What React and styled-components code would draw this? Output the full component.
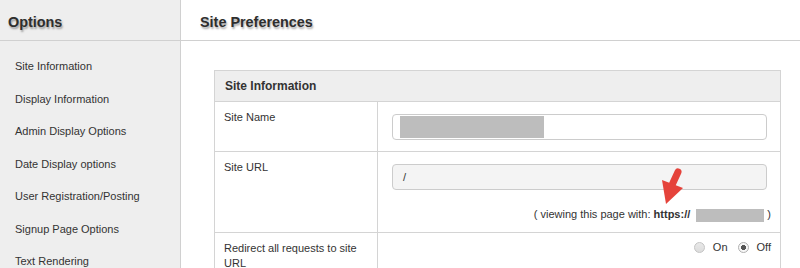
import React from "react";
import styled, { createGlobalStyle } from "styled-components";

const Global = createGlobalStyle`
  html, body { margin: 0; padding: 0; background: #fff; }
  body { font-family: "Liberation Sans", Arial, sans-serif; color: #333; overflow: hidden; }
  * { box-sizing: border-box; }
`;

const Page = styled.div`
  position: relative;
  display: flex;
  width: 800px;
  height: 268px;
  overflow: hidden;
  background: #fff;
`;

const Sidebar = styled.aside`
  flex: none;
  width: 181px;
  background: #eeeeee;
  border-right: 1px solid #d0d0d0;
`;

const Main = styled.main`
  flex: 1;
  min-width: 0;
`;

const PanelHeader = styled.div`
  height: 41px;
  display: flex;
  align-items: center;
  padding: 3px 0 0 ${(p) => p.$indent}px;
  border-bottom: 1px solid #d0d0d0;
`;

const Title = styled.h2`
  margin: 0;
  font-size: 14.4px;
  font-weight: bold;
  color: #2e2e2e;
  text-shadow: 1px 2px 2px rgba(0, 0, 0, 0.35);
`;

const NavList = styled.ul`
  list-style: none;
  margin: 0;
  padding: 9px 0 0;
`;

const NavItem = styled.li`
  height: 32.5px;
  line-height: 32.5px;
  padding-left: 15px;
  font-size: 11px;
  color: #333;
  white-space: nowrap;
`;

const Content = styled.div`
  padding: 29px 19px 0 33px;
`;

const Card = styled.section`
  border: 1px solid #d4d4d4;
`;

const CardHeader = styled.div`
  height: 31px;
  display: flex;
  align-items: center;
  padding-left: 10px;
  background: #eeeeee;
  border-bottom: 1px solid #d4d4d4;
  font-size: 12px;
  font-weight: bold;
  color: #333;
`;

const Row = styled.div`
  display: grid;
  grid-template-columns: 163px 1fr;
  border-bottom: 1px solid #d4d4d4;
  &:last-child { border-bottom: none; }
`;

const Label = styled.div`
  padding: 8px 12px 0 9px;
  border-right: 1px solid #d4d4d4;
  font-size: 11px;
  line-height: 15px;
  color: #333;
`;

const Value = styled.div`
  padding: 12px 9px ${(p) => p.$bottom ?? 11}px 14px;
  font-size: 11px;
  color: #333;
`;

const Field = styled.div`
  height: 26px;
  margin-right: 4px;
  display: flex;
  align-items: center;
  padding-left: ${(p) => (p.$readonly ? 10 : 7)}px;
  border: 1px solid #cccccc;
  border-radius: 4px;
  background: ${(p) => (p.$readonly ? "#f4f4f4" : "#fff")};
  font-size: 11px;
  color: #333;
`;

const Redact = styled.span`
  display: inline-block;
  width: ${(p) => p.$w}px;
  height: ${(p) => p.$h}px;
  background: #bdbdbd;
  vertical-align: middle;
`;

const Note = styled.div`
  margin-top: 18px;
  text-align: right;
  line-height: 13px;
  white-space: nowrap;
`;

const Radios = styled.div`
  display: flex;
  justify-content: flex-end;
  align-items: center;
  height: 13px;
  margin-top: -4px;
`;

const RadioLabel = styled.label`
  display: flex;
  align-items: center;
  gap: 8px;
  margin-left: ${(p) => p.$gap ?? 0}px;
  font-size: 11px;
  color: #333;
`;

const Circle = styled.span`
  width: 11px;
  height: 11px;
  border-radius: 50%;
  border: 1px solid ${(p) => (p.$checked ? "#b0b0b0" : "#c4c4c4")};
  background: ${(p) =>
    p.$checked
      ? "radial-gradient(circle, #555 0 2.3px, #f7f7f7 2.8px)"
      : "linear-gradient(#e9e9e9, #dcdcdc)"};
`;

const Arrow = styled.svg`
  position: absolute;
  left: 655px;
  top: 165px;
  width: 35px;
  height: 45px;
  pointer-events: none;
`;

const navItems = [
  "Site Information",
  "Display Information",
  "Admin Display Options",
  "Date Display options",
  "User Registration/Posting",
  "Signup Page Options",
  "Text Rendering",
];

export default function App() {
  return (
    <Page>
      <Global />
      <Sidebar>
        <PanelHeader $indent={8}>
          <Title>Options</Title>
        </PanelHeader>
        <NavList>
          {navItems.map((t) => (
            <NavItem key={t}>{t}</NavItem>
          ))}
        </NavList>
      </Sidebar>
      <Main>
        <PanelHeader $indent={19}>
          <Title>Site Preferences</Title>
        </PanelHeader>
        <Content>
          <Card>
            <CardHeader>Site Information</CardHeader>
            <Row>
              <Label>Site Name</Label>
              <Value>
                <Field>
                  <Redact $w={144} $h={22} />
                </Field>
              </Value>
            </Row>
            <Row>
              <Label>Site URL</Label>
              <Value $bottom={10}>
                <Field $readonly>/</Field>
                <Note>
                  ( viewing this page with: <b>https://</b>
                  <Redact $w={68} $h={13} style={{ marginLeft: 6 }} /> )
                </Note>
              </Value>
            </Row>
            <Row>
              <Label>Redirect all requests to site URL</Label>
              <Value>
                <Radios>
                  <RadioLabel>
                    <Circle />
                    On
                  </RadioLabel>
                  <RadioLabel $gap={10}>
                    <Circle $checked />
                    Off
                  </RadioLabel>
                </Radios>
              </Value>
            </Row>
          </Card>
        </Content>
      </Main>
      <Arrow viewBox="0 0 35 45">
        <line x1="23" y1="7" x2="17" y2="20" stroke="#e5433b" strokeWidth="7" strokeLinecap="round" />
        <polygon points="7,15 28,23 11,39" fill="#e5433b" />
      </Arrow>
    </Page>
  );
}
